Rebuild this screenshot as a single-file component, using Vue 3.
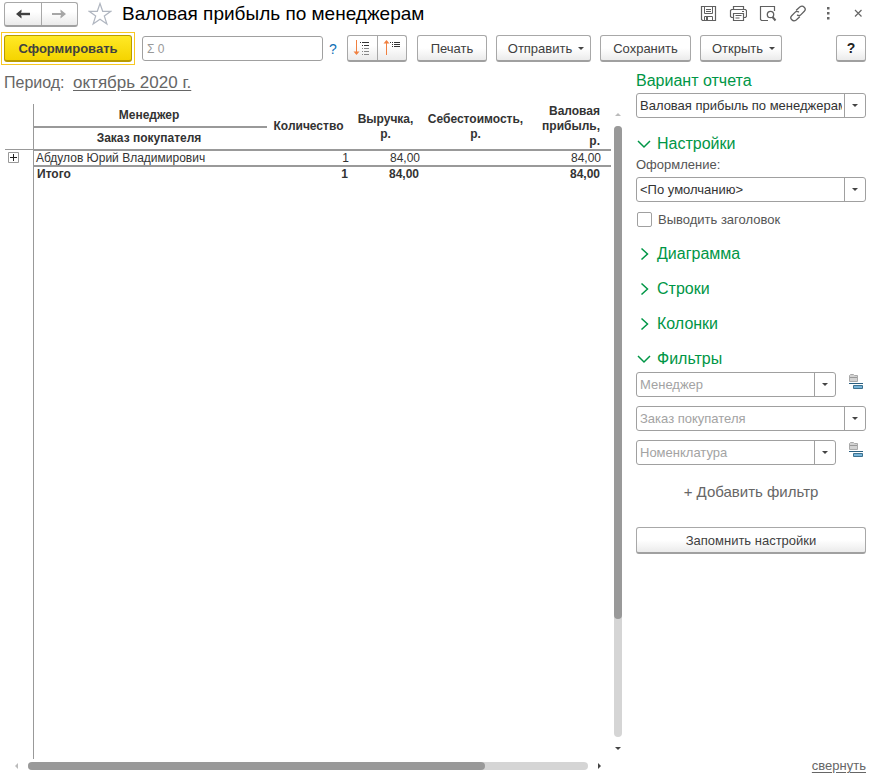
<script setup>
import { ref } from 'vue'

const variant = ref('Валовая прибыль по менеджерам')
const design = ref('<По умолчанию>')
const showTitle = ref(false)
const sections = ['Диаграмма', 'Строки', 'Колонки']
const filters = ref([
  { name: 'Менеджер', value: '', kind: true },
  { name: 'Заказ покупателя', value: '', kind: false },
  { name: 'Номенклатура', value: '', kind: true },
])
const vScroll = { thumb: 491, rest: 118 }
const hScroll = { thumb: 457, rest: 103 }
</script>

<template>
  <div class="window">
    <header class="titlebar">
      <div class="group nav">
        <button type="button" aria-label="Назад">
          <svg width="16" height="12" viewBox="0 0 16 12"><path d="M3 6H15" fill="none" stroke="#404040" stroke-width="2.400" /><path d="M1 6L6.500 1.500V4L5 6L6.500 8V10.500Z" fill="#404040" /></svg>
        </button>
        <button type="button" aria-label="Вперед">
          <svg width="16" height="12" viewBox="0 0 16 12"><path d="M1 6H13" fill="none" stroke="#a6a6a6" stroke-width="2" /><path d="M15 6L9.500 1.500V4L11 6L9.500 8V10.500Z" fill="#a6a6a6" /></svg>
        </button>
      </div>
      <button type="button" class="plain star" aria-label="В избранное">
        <svg width="24" height="24" viewBox="0 0 24 24"><path d="M12 1.500L14.700 9.300H22.800L16.300 14L18.900 22L12 17.200L5.100 22L7.700 14L1.200 9.300H9.300Z" fill="#fff" stroke="#b0b6c0" stroke-width="1.200" /></svg>
      </button>
      <h1>Валовая прибыль по менеджерам</h1>
      <div class="tools">
        <button type="button" class="plain" aria-label="Сохранить в файл">
          <svg width="18" height="18" viewBox="0 0 18 18" fill="none" stroke="#606060"><path d="M2.500 1.500H16.500V15.500H3.500L2.500 14.500Z" stroke-width="1.200" /><path d="M5.500 1.500V8.500H13.500V1.500M7 4.500H12M7 6.500H12M5.500 15.500V11.500H13.500V15.500" /><path d="M7 12H9V15H7Z" fill="#606060" stroke="none" /></svg>
        </button>
        <button type="button" class="plain" aria-label="Печать">
          <svg width="18" height="18" viewBox="0 0 18 18" fill="none" stroke="#606060" stroke-width="1.200"><path d="M4.500 4.500V1.500H14.500V4.500" /><path d="M4.500 12.500H2.500L1.500 11.500V5.500L2.500 4.500H16.500L17.500 5.500V11.500L16.500 12.500H14.500" /><path d="M4.500 8.500H14.500V15.500H4.500ZM6.500 10.500H12.500M6.500 13H10.500M13 6.500H15" /></svg>
        </button>
        <button type="button" class="plain" aria-label="Просмотр">
          <svg width="18" height="18" viewBox="0 0 18 18" fill="none" stroke="#606060"><path d="M9 15.500H2.500L1.500 14.500V1.500H15.500V6" stroke-width="1.200" /><circle cx="11.500" cy="9.500" r="3.200" stroke-width="1.300" /><path d="M13.500 12L16.500 15.500" stroke-width="2" /></svg>
        </button>
        <button type="button" class="plain" aria-label="Получить ссылку">
          <svg width="18" height="18" viewBox="0 0 18 18" fill="none" stroke="#606060" stroke-width="1.300" stroke-linecap="round"><path d="M7.500 5L10.800 2C12.500 0.800 14 1 15.200 2.200C16.600 3.600 16.500 5.100 15.300 6.300L12 9.600C11 10.600 9.500 10.700 8.500 10.100" /><path d="M10.500 12L7.200 15C5.500 16.200 4 16 2.800 14.800C1.400 13.400 1.500 11.900 2.700 10.700L6 7.400C7 6.400 8.500 6.300 9.500 6.900" /></svg>
        </button>
        <button type="button" class="plain" aria-label="Еще">
          <svg width="18" height="18" viewBox="0 0 18 18" fill="#666"><path d="M8 2H10.500V4.500H8ZM8 7H10.500V9.500H8ZM8 12H10.500V14.500H8Z" /></svg>
        </button>
        <button type="button" class="plain" aria-label="Закрыть">
          <svg width="18" height="18" viewBox="0 0 18 18"><path d="M6 5L12.500 11.500M12.500 5L6 11.500" fill="none" stroke="#666" stroke-width="1.200" /></svg>
        </button>
      </div>
    </header>

    <div class="toolbar">
      <button type="button" class="btn primary">Сформировать</button>
      <input class="sum" type="text" value="Σ 0" aria-label="Сумма" readonly />
      <a class="hint" href="#">?</a>
      <div class="group levels">
        <button type="button" aria-label="Развернуть группы">
          <svg width="18" height="18" viewBox="0 0 18 18"><path d="M3.500 1V14" stroke="#f08040" /><path d="M0.500 12.500H6.500L3.500 16Z" fill="#f08040" /><path d="M7 3.500H8M9 3.500H16M9 6.500H10M11 6.500H16" stroke="#333" /><path d="M9 9.500H10M11 9.500H16M9 12.500H10M11 12.500H16M9 15.500H10M11 15.500H16" stroke="#888" /></svg>
        </button>
        <button type="button" aria-label="Свернуть группы">
          <svg width="18" height="18" viewBox="0 0 18 18"><path d="M3.500 3V16" stroke="#f08040" /><path d="M0.500 4.500H6.500L3.500 1Z" fill="#f08040" /><path d="M7 3.500H8M9 3.500H10M11 3.500H17M9 5.500H10M11 5.500H17M9 7.500H10M11 7.500H17" stroke="#333" /></svg>
        </button>
      </div>
      <button type="button" class="btn print">Печать</button>
      <button type="button" class="btn send">Отправить<i class="caret"></i></button>
      <button type="button" class="btn save">Сохранить</button>
      <button type="button" class="btn open">Открыть<i class="caret"></i></button>
      <button type="button" class="btn help">?</button>
    </div>

    <div class="body">
      <main class="report">
        <p class="period">Период: <a href="#">октябрь 2020 г.</a></p>
        <div class="view">
          <div class="sheet">
            <table>
              <colgroup>
                <col class="c-gutter" /><col /><col class="c-qty" /><col class="c-rev" /><col class="c-cost" /><col class="c-profit" />
              </colgroup>
              <thead>
                <tr class="h1">
                  <td rowspan="2" class="gutter"></td>
                  <th class="thick group-name">Менеджер</th>
                  <th rowspan="2" class="thick">Количество</th>
                  <th rowspan="2" class="thick">Выручка,<br />р.</th>
                  <th rowspan="2" class="thick">Себестоимость,<br />р.</th>
                  <th rowspan="2" class="thick profit">Валовая<br />прибыль,<br />р.</th>
                </tr>
                <tr class="h2">
                  <th class="thick group-name">Заказ покупателя</th>
                </tr>
              </thead>
              <tbody>
                <tr>
                  <td class="expand">
                    <button type="button" class="plus" aria-label="Развернуть">
                      <svg width="11" height="11" viewBox="0 0 11 11"><path d="M0.500 0.500H10.500V10.500H0.500Z" fill="#fff" stroke="#999" /><path d="M2 5.500H9M5.500 2V9" stroke="#222" /></svg>
                    </button>
                  </td>
                  <td class="thick name">Абдулов Юрий Владимирович</td>
                  <td class="thick num">1</td>
                  <td class="thick num">84,00</td>
                  <td class="thick num"></td>
                  <td class="thick num last">84,00</td>
                </tr>
                <tr class="total">
                  <td></td>
                  <td class="name">Итого</td>
                  <td class="num">1</td>
                  <td class="num">84,00</td>
                  <td class="num"></td>
                  <td class="num last">84,00</td>
                </tr>
              </tbody>
            </table>
          </div>
          <div class="vbar">
            <i class="tri up"></i>
            <div class="track">
              <div class="thumb" :style="{ flexGrow: vScroll.thumb }"></div>
              <div :style="{ flexGrow: vScroll.rest }"></div>
            </div>
            <i class="tri down"></i>
          </div>
        </div>
        <div class="hbar">
          <i class="tri left"></i>
          <div class="track">
            <div class="thumb" :style="{ flexGrow: hScroll.thumb }"></div>
            <div :style="{ flexGrow: hScroll.rest }"></div>
          </div>
          <i class="tri right"></i>
        </div>
      </main>

      <aside class="settings">
        <label class="heading" for="variant">Вариант отчета</label>
        <div class="combo">
          <select id="variant" v-model="variant"><option>Валовая прибыль по менеджерам</option></select>
          <span class="drop"><i class="caret"></i></span>
        </div>

        <button type="button" class="plain section first">
          <svg width="14" height="14" viewBox="0 0 14 14"><path d="M1 4L7 10L13 4" /></svg>Настройки
        </button>
        <label class="caption" for="design">Оформление:</label>
        <div class="combo">
          <select id="design" v-model="design"><option>&lt;По умолчанию&gt;</option></select>
          <span class="drop"><i class="caret"></i></span>
        </div>
        <label class="check"><input v-model="showTitle" type="checkbox" />Выводить заголовок</label>

        <button v-for="s in sections" :key="s" type="button" class="plain section closed">
          <svg width="14" height="14" viewBox="0 0 14 14"><path d="M4.500 1.500L10.500 7L4.500 12.500" /></svg>{{ s }}
        </button>

        <button type="button" class="plain section">
          <svg width="14" height="14" viewBox="0 0 14 14"><path d="M1 4L7 10L13 4" /></svg>Фильтры
        </button>
        <div class="filters">
          <div v-for="f in filters" :key="f.name" class="filter">
            <div class="combo">
              <input v-model="f.value" type="text" :placeholder="f.name" :aria-label="f.name" />
              <button type="button" class="drop" :aria-label="'Выбрать: ' + f.name"><i class="caret"></i></button>
            </div>
            <button v-if="f.kind" type="button" class="plain kind" aria-label="Вид сравнения">
              <svg width="16" height="16" viewBox="0 0 16 16"><path d="M1.500 7.500V1.500L2.500 0.500H5.500L6.500 1.500H9.500V7.500Z" fill="#d2d2d2" stroke="#aaa" /><path d="M2 3.500H9" stroke="#999" /><path d="M1 9.500H15" stroke="#2a5f80" /><path d="M5.500 11.500H14.500V14.500H5.500Z" fill="#78b4d8" stroke="#3d7290" /></svg>
            </button>
          </div>
        </div>
        <button type="button" class="plain add">+ Добавить фильтр</button>
        <button type="button" class="btn remember">Запомнить настройки</button>
        <a class="collapse" href="#">свернуть</a>
      </aside>
    </div>
  </div>
</template>

<style>
body {
  background: #fff;
}
</style>

<style scoped>
* {
  box-sizing: border-box;
}
.window {
  min-height: 100vh;
  display: flex;
  flex-direction: column;
  font-family: "Liberation Sans", Arial, sans-serif;
  font-size: 13px;
  color: #404040;
}
button,
input,
select {
  font: inherit;
  color: inherit;
  margin: 0;
}
svg {
  display: block;
  flex: none;
}
.plain {
  border: 0;
  background: none;
  padding: 0;
}
.titlebar {
  display: flex;
  align-items: center;
  height: 28px;
  padding: 0 2px 0 4px;
}
.group {
  display: flex;
  height: 27px;
  border: 1px solid #a8a8a8;
  border-bottom: 2px solid #a0a0a0;
  border-radius: 3px;
  background: linear-gradient(#fff 40%, #ebebeb);
}
.group button {
  flex: 1;
  display: flex;
  align-items: center;
  justify-content: center;
  padding: 0;
  border: 0;
  background: none;
}
.group button + button {
  border-left: 1px solid #a8a8a8;
}
.nav {
  width: 74px;
  height: 25px;
}
.star {
  margin-left: 10px;
}
h1 {
  margin: 0 0 0 10px;
  font-size: 19px;
  font-weight: 400;
  line-height: 24px;
  color: #000;
}
.tools {
  margin-left: auto;
  display: flex;
  gap: 12px;
}
.toolbar {
  display: flex;
  align-items: center;
  height: 41px;
  padding: 0 3px 0 4px;
}
.btn {
  display: flex;
  align-items: center;
  justify-content: center;
  gap: 6px;
  height: 27px;
  padding: 0;
  border: 1px solid #a8a8a8;
  border-bottom: 2px solid #a0a0a0;
  border-radius: 3px;
  background: linear-gradient(#fff 50%, #ebebeb);
}
.primary {
  position: relative;
  width: 128px;
  border-color: #b89b00;
  background: linear-gradient(#ffe926, #f5d400);
  font-weight: 700;
}
.primary::after {
  content: "";
  position: absolute;
  inset: -4px -4px -5px;
  border: 1px solid #f8c822;
}
.sum {
  width: 181px;
  height: 25px;
  margin-left: 10px;
  padding: 0 4px;
  border: 1px solid #a0a0a0;
  border-radius: 3px;
  font-size: 12px;
  color: #999;
}
.hint {
  width: 24px;
  padding-left: 6px;
  color: #0f6fb5;
  text-decoration: none;
  font-size: 14px;
}
.levels {
  width: 60px;
}
.print {
  width: 70px;
  margin-left: 10px;
}
.send {
  width: 95px;
  margin-left: 9px;
  padding-left: 5px;
}
.save {
  width: 91px;
  margin-left: 9px;
}
.open {
  width: 82px;
  margin-left: 9px;
  padding-left: 5px;
}
.help {
  width: 30px;
  margin-left: auto;
  font-weight: 700;
  font-size: 14px;
  color: #222;
}
.caret {
  border: 3px solid transparent;
  border-top-color: #444;
  border-bottom: 0;
}
.body {
  flex: 1;
  display: flex;
  padding-right: 3px;
}
.report {
  flex: 1;
  min-width: 0;
  display: flex;
  flex-direction: column;
}
.period {
  margin: 0;
  padding: 4px 4px 12px;
  font-size: 16px;
  line-height: 19px;
  color: #666;
}
.period a {
  margin-left: 4px;
  font-size: 17px;
  color: #666;
  text-underline-offset: 2px;
}
.view {
  flex: 1;
  display: flex;
  padding-left: 5px;
}
.sheet {
  flex: 1;
  min-width: 0;
  background: linear-gradient(#999, #999) 28px 0 / 1px 100% no-repeat;
}
table {
  width: 100%;
  table-layout: fixed;
  border-spacing: 0;
  font-size: 12px;
  line-height: 14px;
  color: #333;
}
td,
th {
  padding: 0;
}
.c-gutter {
  width: 29px;
}
.c-qty {
  width: 83px;
}
.c-rev {
  width: 71px;
}
.c-cost {
  width: 109px;
}
.c-profit {
  width: 81px;
}
.h1 {
  height: 24px;
}
.h2 {
  height: 23px;
}
thead th {
  line-height: 15px;
}
.thick {
  border-bottom: 2px solid #999;
}
.group-name {
  padding-right: 3px;
}
.gutter {
  background: linear-gradient(#999, #999) 0 45px / 28px 1px no-repeat;
}
.profit {
  text-align: right;
  padding-right: 11px;
}
.expand {
  padding-left: 3px;
  vertical-align: top;
}
.plus {
  display: block;
  margin-top: 1px;
  border: 0;
  padding: 0;
  background: none;
}
.name {
  padding-left: 2px;
}
.num {
  text-align: right;
  padding-right: 1px;
}
.last {
  padding-right: 10px;
}
.total {
  font-weight: 700;
}
.total .num {
  padding-right: 2px;
}
.total .last {
  padding-right: 11px;
}
.total .name {
  padding-left: 3px;
}
.vbar {
  width: 14px;
  margin-right: 11px;
  padding: 9px 3px 9px;
  display: flex;
  flex-direction: column;
  align-items: center;
  gap: 10px;
}
.track {
  flex: 1;
  display: flex;
  border-radius: 4px;
  background: #d5d5d5;
}
.vbar .track {
  width: 8px;
  flex-direction: column;
}
.thumb {
  border-radius: 4px;
  background: #999;
}
.tri {
  flex: none;
  border: 3px solid transparent;
}
.up {
  border-bottom-color: #bbb;
  border-top: 0;
}
.down {
  border-top-color: #444;
  border-bottom: 0;
}
.left {
  border-right-color: #bbb;
  border-left: 0;
}
.right {
  border-left-color: #444;
  border-right: 0;
}
.hbar {
  display: flex;
  align-items: center;
  gap: 10px;
  height: 16px;
  padding: 0 35px 3px 15px;
}
.hbar .track {
  height: 8px;
}
.settings {
  width: 230px;
  flex: none;
  display: flex;
  flex-direction: column;
}
.heading {
  padding-top: 2px;
  font-size: 16px;
  line-height: 20px;
  color: #009646;
}
.combo {
  flex: 1 1 auto;
  display: flex;
  height: 25px;
  border: 1px solid #a0a0a0;
  border-radius: 3px;
  background: #fff;
  overflow: hidden;
}
.settings > .combo {
  flex: none;
}
.heading + .combo {
  margin-top: 2px;
}
.combo select,
.combo input {
  flex: 1;
  width: 0;
  min-width: 0;
  margin-right: 2px;
  padding: 0 0 0 3px;
  border: 0;
  background: none;
  appearance: none;
  color: #333;
  outline: 0;
}
.combo input::placeholder {
  color: #a3a3a3;
  opacity: 1;
}
.drop {
  width: 21px;
  display: flex;
  align-items: center;
  justify-content: center;
  padding: 0;
  border: 0;
  border-left: 1px solid #a0a0a0;
  background: none;
  pointer-events: none;
}
.section {
  display: flex;
  align-items: center;
  gap: 6px;
  height: 20px;
  padding-left: 1px;
  margin-top: 15px;
  font-size: 16px;
  color: #009646;
}
.section path {
  fill: none;
  stroke: #009646;
  stroke-width: 1.5;
}
.section.first {
  margin-top: 16px;
}
.caption {
  padding: 3px 0 4px;
  line-height: 16px;
  color: #555;
}
.check {
  display: flex;
  align-items: center;
  gap: 6px;
  height: 16px;
  margin-top: 9px;
  color: #555;
}
.check + .section {
  margin-top: 17px;
}
.check input {
  appearance: none;
  width: 15px;
  height: 15px;
  margin-left: 1px;
  border: 1px solid #a0a0a0;
  border-radius: 2px;
  background: #fff;
}
.filters {
  display: flex;
  flex-direction: column;
  gap: 9px;
  margin-top: 3px;
}
.filter {
  display: flex;
}
.kind {
  margin-left: 12px;
  width: 18px;
  height: 20px;
}
.add {
  align-self: center;
  margin-top: 17px;
  font-size: 15px;
  line-height: 20px;
  color: #666;
}
.remember {
  margin-top: 25px;
}
.collapse {
  margin-top: auto;
  align-self: flex-end;
  line-height: 18px;
  color: #666;
  text-underline-offset: 2px;
}
</style>
